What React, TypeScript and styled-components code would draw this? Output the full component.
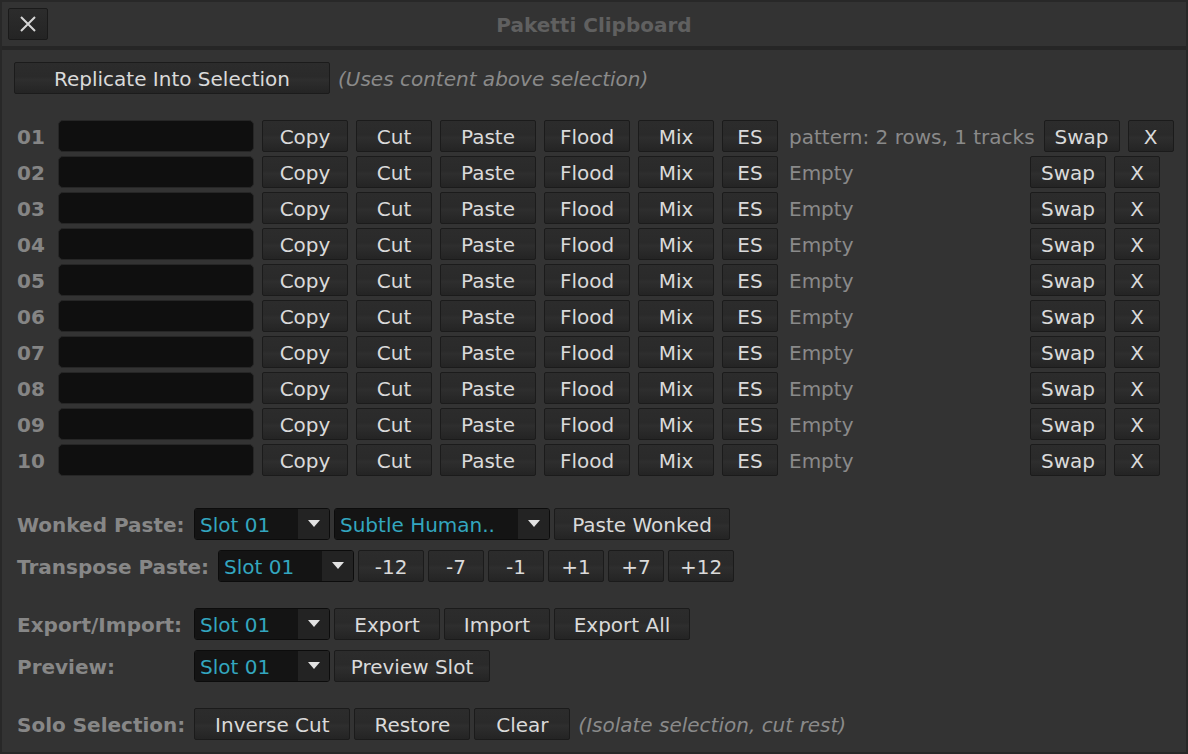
import React from "react";
import styled, { createGlobalStyle } from "styled-components";

const GlobalStyle = createGlobalStyle`
  html, body {
    margin: 0;
    padding: 0;
    background: #333333;
  }
  body {
    font-family: "DejaVu Sans", "Liberation Sans", sans-serif;
  }
`;

const Window = styled.div`
  width: 1188px;
  height: 754px;
  box-sizing: border-box;
  border: 2px solid #282828;
  background: #333333;
  display: flex;
  flex-direction: column;
  overflow: hidden;
  font-size: 20px;
`;

const TitleBar = styled.div`
  height: 44px;
  border-bottom: 4px solid #262626;
  display: grid;
  grid-template-columns: 1fr auto 1fr;
  align-items: center;
`;

const CloseButton = styled.button`
  justify-self: start;
  margin-left: 6px;
  width: 40px;
  height: 32px;
  padding: 0;
  display: flex;
  align-items: center;
  justify-content: center;
  background: linear-gradient(#2c2c2c, #282828 55%, #242424);
  border: 1px solid #1a1a1a;
  border-radius: 2px;
`;

const Title = styled.div`
  font-weight: bold;
  font-size: 20px;
  color: #606060;
  padding-top: 2px;
`;

const Content = styled.div`
  padding: 12px 0 0 12px;
  display: flex;
  flex-direction: column;
`;

const Line = styled.div<{ $gap?: number; $mt?: number }>`
  display: flex;
  align-items: center;
  height: 32px;
  gap: ${(p) => p.$gap ?? 4}px;
  margin-top: ${(p) => p.$mt ?? 0}px;
  white-space: nowrap;
`;

const Btn = styled.button<{ $w: number }>`
  width: ${(p) => p.$w}px;
  height: 32px;
  flex: none;
  box-sizing: border-box;
  padding: 2px 0 0;
  font-family: "DejaVu Sans", "Liberation Sans", sans-serif;
  font-size: 20px;
  color: #dadada;
  background: linear-gradient(#2c2c2c 0%, #2a2a2a 45%, #2e2e2e 55%, #242424 100%);
  border: 1px solid #1b1b1b;
  border-radius: 2px;
  line-height: 28px;
`;

const Hint = styled.span`
  margin: 2px 0 0 4px;
  font-style: italic;
  color: #8a8a8a;
`;

const SlotNum = styled.div`
  width: 40px;
  box-sizing: border-box;
  padding-left: 3px;
  margin-top: 2px;
  font-weight: bold;
  color: #858585;
  flex: none;
`;

const NameField = styled.div`
  width: 196px;
  height: 32px;
  box-sizing: border-box;
  background: #0f0f0f;
  border: 1px solid #262626;
  border-radius: 5px;
  margin-left: -4px;
  flex: none;
`;

const Status = styled.div`
  min-width: 236px;
  box-sizing: border-box;
  padding: 0 1px 0 3px;
  margin-top: 2px;
  color: #8a8a8a;
  flex: none;
`;

const Label = styled.div`
  min-width: 176px;
  box-sizing: border-box;
  padding: 0 5px 0 3px;
  margin-top: 2px;
  font-weight: bold;
  color: #878787;
  flex: none;
`;

const SelectBox = styled.div<{ $w: number }>`
  width: ${(p) => p.$w}px;
  height: 32px;
  box-sizing: border-box;
  display: flex;
  border: 1px solid #0c0c0c;
  border-radius: 3px;
  overflow: hidden;
  flex: none;
`;

const SelectText = styled.div`
  flex: 1;
  background: #141414;
  color: #33a6bf;
  padding: 2px 0 0 5px;
  line-height: 28px;
  overflow: hidden;
`;

const SelectArrow = styled.div`
  width: 31px;
  background: #232323;
  display: flex;
  align-items: center;
  justify-content: center;
`;

const Select = ({ w, value }: { w: number; value: string }) => (
  <SelectBox $w={w}>
    <SelectText>{value}</SelectText>
    <SelectArrow>
      <svg width="12" height="8" viewBox="0 0 12 8">
        <polygon points="0,0 12,0 6,7" fill="#e2e2e2" />
      </svg>
    </SelectArrow>
  </SelectBox>
);

const slots = ["01", "02", "03", "04", "05", "06", "07", "08", "09", "10"];

const App: React.FC = () => {
  return (
    <>
      <GlobalStyle />
      <Window>
        <TitleBar>
          <CloseButton>
            <svg width="18" height="18" viewBox="0 0 18 18">
              <path d="M2 2 L16 16 M16 2 L2 16" stroke="#d6d6d6" strokeWidth="2" />
            </svg>
          </CloseButton>
          <Title>Paketti Clipboard</Title>
          <div />
        </TitleBar>
        <Content>
          <Line>
            <Btn $w={316}>Replicate Into Selection</Btn>
            <Hint>(Uses content above selection)</Hint>
          </Line>

          {slots.map((s, i) => (
            <Line key={s} $gap={8} $mt={i === 0 ? 26 : 4}>
              <SlotNum>{s}</SlotNum>
              <NameField />
              <Btn $w={86}>Copy</Btn>
              <Btn $w={76}>Cut</Btn>
              <Btn $w={96}>Paste</Btn>
              <Btn $w={86}>Flood</Btn>
              <Btn $w={76}>Mix</Btn>
              <Btn $w={56}>ES</Btn>
              <Status>{i === 0 ? "pattern: 2 rows, 1 tracks" : "Empty"}</Status>
              <Btn $w={76}>Swap</Btn>
              <Btn $w={46}>X</Btn>
            </Line>
          ))}

          <Line $mt={32}>
            <Label>Wonked Paste:</Label>
            <Select w={136} value="Slot 01" />
            <Select w={216} value="Subtle Human.." />
            <Btn $w={176}>Paste Wonked</Btn>
          </Line>
          <Line $mt={10}>
            <Label>Transpose Paste:</Label>
            <Select w={136} value="Slot 01" />
            <Btn $w={66}>-12</Btn>
            <Btn $w={56}>-7</Btn>
            <Btn $w={56}>-1</Btn>
            <Btn $w={56}>+1</Btn>
            <Btn $w={56}>+7</Btn>
            <Btn $w={66}>+12</Btn>
          </Line>

          <Line $mt={26}>
            <Label>Export/Import:</Label>
            <Select w={136} value="Slot 01" />
            <Btn $w={106}>Export</Btn>
            <Btn $w={106}>Import</Btn>
            <Btn $w={136}>Export All</Btn>
          </Line>
          <Line $mt={10}>
            <Label>Preview:</Label>
            <Select w={136} value="Slot 01" />
            <Btn $w={156}>Preview Slot</Btn>
          </Line>

          <Line $mt={26}>
            <Label>Solo Selection:</Label>
            <Btn $w={156}>Inverse Cut</Btn>
            <Btn $w={116}>Restore</Btn>
            <Btn $w={96}>Clear</Btn>
            <Hint>(Isolate selection, cut rest)</Hint>
          </Line>
        </Content>
      </Window>
    </>
  );
};

export default App;
